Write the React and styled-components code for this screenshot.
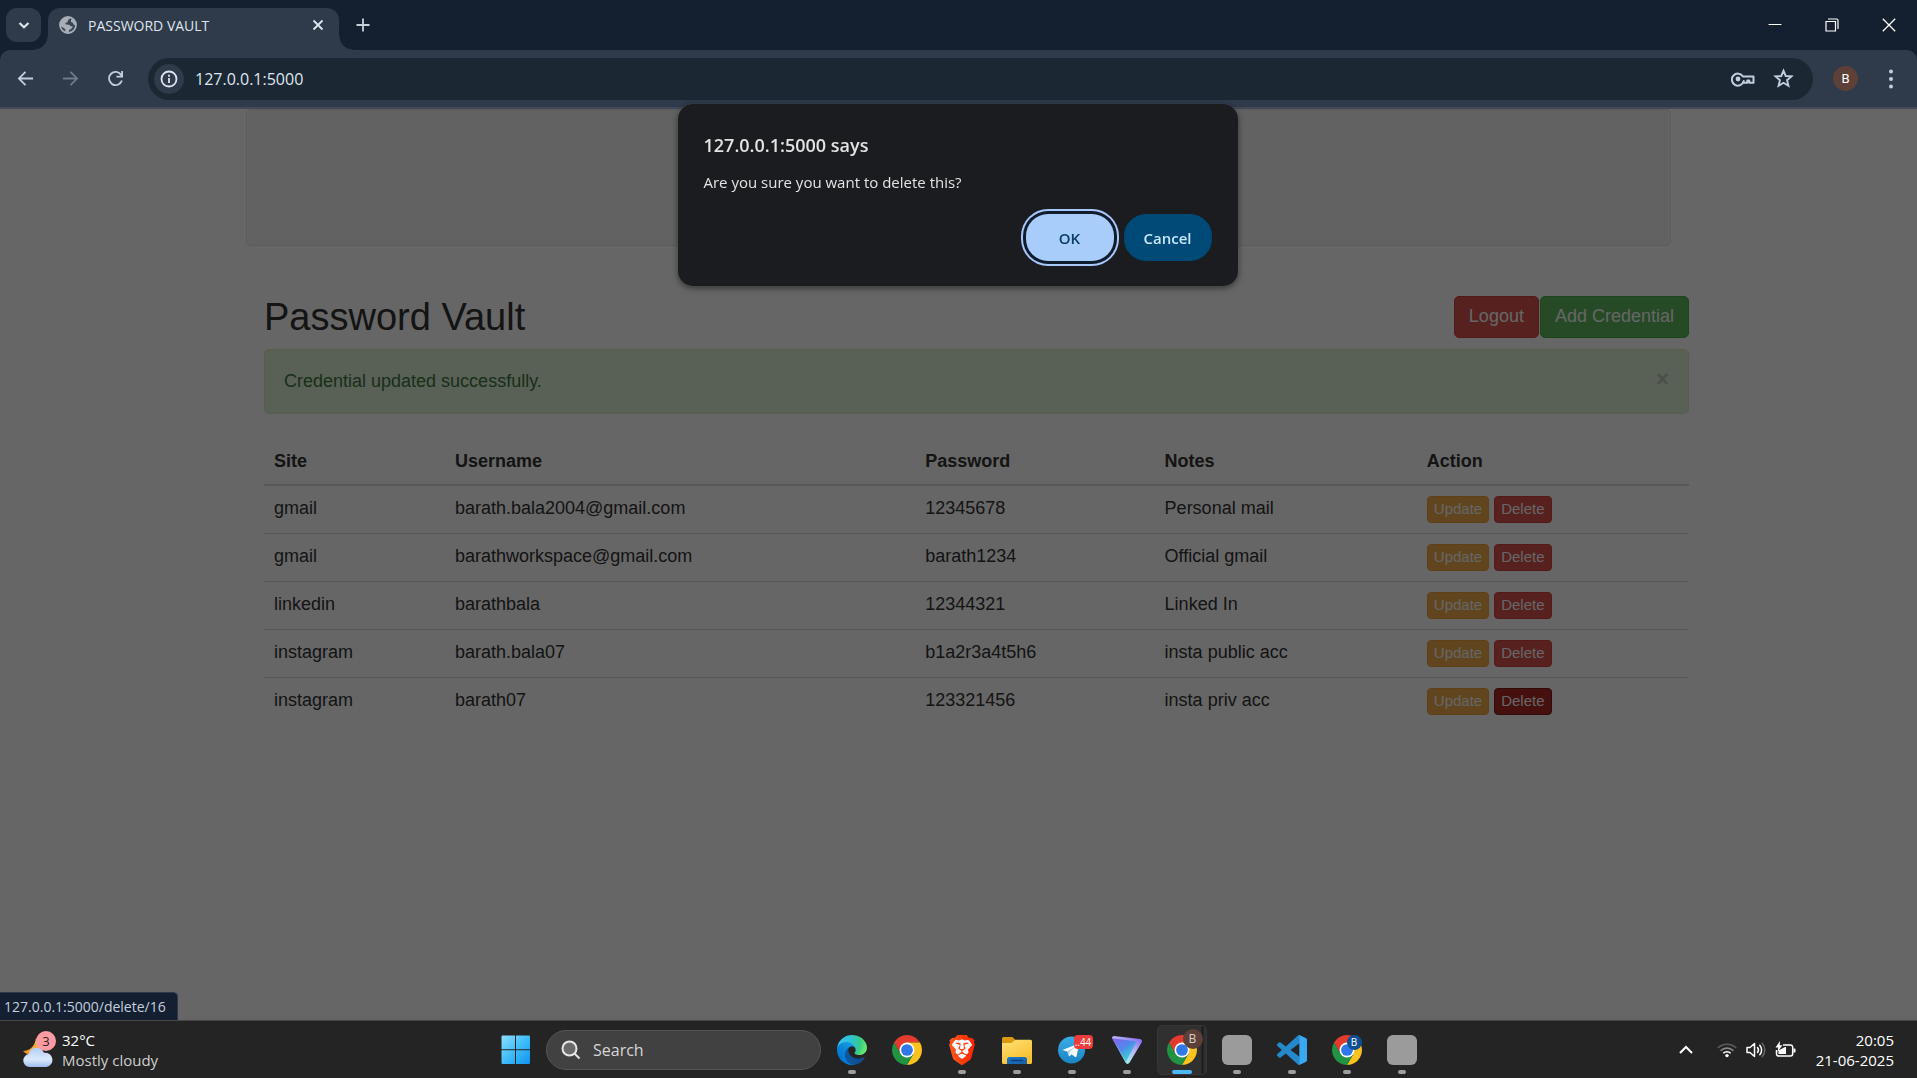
import React from "react";
import styled, { createGlobalStyle, css } from "styled-components";

const uiFont = '"Segoe UI", "Open Sans", "Noto Sans", sans-serif';
const pageFont = '"Helvetica Neue", Arial, "Liberation Sans", sans-serif';

const GlobalStyle = createGlobalStyle`
  *, *::before, *::after { box-sizing: border-box; }
  body { margin: 0; background: #242424; }
  button, input { font: inherit; color: inherit; margin: 0; }
  button { cursor: pointer; }
  svg { display: block; flex: none; }
`;

const Screen = styled.div`
  display: flex;
  flex-direction: column;
  min-height: 100vh;
  font-family: ${uiFont};
`;

/* ---------- browser chrome ---------- */

const BrowserBar = styled.header`
  background: #141f2f;
  color: #dfe5ee;
`;

const TabStrip = styled.div`
  display: flex;
  align-items: flex-end;
  height: 50px;
  padding-left: 6px;
`;

const PlainButton = styled.button`
  display: flex;
  align-items: center;
  justify-content: center;
  padding: 0;
  border: 0;
  background: none;
`;

const TabSearch = styled(PlainButton)`
  width: 35px;
  height: 34px;
  margin: 0 7px 8px 0;
  border-radius: 11px;
  background: #2f3a4a;
`;

const Tab = styled.div`
  position: relative;
  display: flex;
  align-items: center;
  gap: 11px;
  width: 291px;
  height: 42px;
  padding: 0 12px 8px 11px;
  border-radius: 12px 12px 0 0;
  background: #2f3a4a;
  font-size: 14px;

  &::before,
  &::after {
    content: "";
    position: absolute;
    bottom: 0;
    width: 14px;
    height: 14px;
  }
  &::before {
    right: 100%;
    background: radial-gradient(circle at 0 0, transparent 13px, #2f3a4a 14px);
  }
  &::after {
    left: 100%;
    background: radial-gradient(circle at 100% 0, transparent 13px, #2f3a4a 14px);
  }
`;

const TabTitle = styled.span`
  flex: 1;
  white-space: nowrap;
`;

const TabButton = styled(PlainButton)`
  width: 18px;
  height: 20px;
`;

const NewTab = styled(PlainButton)`
  width: 34px;
  height: 34px;
  margin: 0 0 8px 7px;
  color: #c8d0dc;
`;

const WindowControls = styled.div`
  display: flex;
  align-self: stretch;
  margin-left: auto;
`;

const WindowButton = styled(PlainButton)`
  width: 57px;
  height: 49px;
  color: #fff;
`;

const Toolbar = styled.div`
  display: flex;
  align-items: center;
  height: 59px;
  padding: 0 15px 0 3px;
  border-bottom: 2px solid #424a57;
  border-radius: 10px 10px 0 0;
  background: #2f3a4a;
`;

const ToolButton = styled(PlainButton)`
  width: 45px;
  height: 42px;
  color: ${(p) => (p.$dim ? "#6f7988" : "#c3cddd")};
`;

const AddressBar = styled.div`
  display: flex;
  align-items: center;
  flex: 1;
  height: 42px;
  margin-left: 10px;
  padding: 0 10px 0 6px;
  border-radius: 21px;
  background: #1b2834;
`;

const SiteInfo = styled(PlainButton)`
  width: 30px;
  height: 30px;
  border-radius: 50%;
  background: #2f3a4a;
`;

const AddressInput = styled.input`
  flex: 1;
  min-width: 0;
  padding: 0 0 0 11px;
  border: 0;
  outline: 0;
  background: none;
  font-size: 16px;
`;

const AddressButton = styled(PlainButton)`
  width: 40px;
  height: 40px;
  color: #c3cddd;
`;

const ProfileButton = styled(PlainButton)`
  width: 25px;
  height: 25px;
  margin: 0 22px 0 20px;
  border-radius: 50%;
  background: #5d4037;
  color: #fff;
  font-size: 13px;
  font-family: Roboto, sans-serif;
`;

const MenuButton = styled(PlainButton)`
  width: 22px;
  height: 42px;
  color: #c3cddd;
`;

/* ---------- page ---------- */

const Viewport = styled.main`
  position: relative;
  flex: 1;
  background: #fff;
  color: #333;
  font-family: ${pageFont};
  font-size: 18px;
  line-height: 25px;
`;

const Scrim = styled.div`
  position: absolute;
  inset: 0;
  background: rgba(0, 0, 0, 0.6);
`;

const Container = styled.div`
  max-width: 1463px;
  margin: 0 auto;
  padding: 0 19px;
`;

const Well = styled.div`
  padding: 67px 0 68px;
  border: 1px solid #e3e3e3;
  border-radius: 5px;
  background: #f5f5f5;
`;

const Section = styled.section`
  margin: 50px -18px 0 18px;
`;

const SectionHeader = styled.div`
  display: flex;
  align-items: center;
  justify-content: space-between;
`;

const Title = styled.h1`
  margin: 0;
  font-size: 38px;
  font-weight: 500;
  line-height: 40px;
`;

const Actions = styled.div`
  display: flex;
  gap: ${(p) => p.$gap}px;
`;

const palette = {
  danger: css`
    background: #d9534f;
    border-color: #d43f3a;
  `,
  dangerActive: css`
    background: #ac2925;
    border-color: #761c19;
  `,
  success: css`
    background: #5cb85c;
    border-color: #4cae4c;
  `,
  warning: css`
    background: #f0ad4e;
    border-color: #eea236;
  `,
};

const Button = styled.button`
  padding: ${(p) => (p.$small ? "0 6px 1px" : "7px 14px 8px")};
  border: 1px solid;
  border-radius: ${(p) => (p.$small ? 4 : 5)}px;
  font-size: ${(p) => (p.$small ? 15 : 18)}px;
  line-height: ${(p) => (p.$small ? 24 : 25)}px;
  white-space: nowrap;
  ${(p) => palette[p.$tone]}
  color: #fff;
`;

const Alert = styled.div`
  display: flex;
  align-items: flex-start;
  justify-content: space-between;
  margin-top: 11px;
  padding: 19px;
  border: 1px solid #d6e9c6;
  border-radius: 5px;
  background: #dff0d8;
  color: #3c763d;
`;

const AlertClose = styled(PlainButton)`
  width: 13px;
  color: #000;
  font-size: 23px;
  font-weight: 700;
  line-height: 20px;
  opacity: 0.16;
`;

const Table = styled.table`
  width: 100%;
  margin-top: 25px;
  border-collapse: collapse;
  table-layout: fixed;
`;

const Col = styled.col`
  width: ${(p) => p.$w}%;
`;

const HeadCell = styled.th`
  padding: 10px;
  border-bottom: 2px solid #ddd;
  text-align: left;
  vertical-align: bottom;
`;

const Cell = styled.td`
  height: 48px;
  padding: 10px 10px 9px;
  border-top: 1px solid #ddd;
  line-height: 25px;
  vertical-align: top;
`;

const StatusBubble = styled.div`
  position: absolute;
  left: 0;
  bottom: 0;
  padding: 0 11px 0 4px;
  border: 1px solid #2d3848;
  border-width: 1px 1px 0 0;
  border-radius: 0 5px 0 0;
  background: #142032;
  color: #c5cedb;
  font-family: ${uiFont};
  font-size: 14px;
  line-height: 27px;
`;

/* ---------- confirm dialog ---------- */

const DialogLayer = styled.div`
  position: fixed;
  top: 104px;
  left: 0;
  right: 2px;
  display: flex;
  justify-content: center;
`;

const Dialog = styled.div`
  width: 560px;
  padding: 25px 26px;
  border-radius: 15px;
  background: #1a1c20;
  box-shadow: 0 2px 6px rgba(0, 0, 0, 0.5), 0 0 1px rgba(140, 150, 160, 0.6);
  color: #e3e3e3;
`;

const DialogTitle = styled.h2`
  margin: 0;
  font-size: 18px;
  font-weight: 600;
  line-height: 32px;
`;

const DialogText = styled.p`
  margin: 9px 0 0;
  font-size: 15px;
  line-height: 25px;
`;

const DialogButtons = styled.div`
  display: flex;
  justify-content: flex-end;
  gap: 10px;
  margin-top: 19px;
`;

const DialogButton = styled.button`
  width: 88px;
  height: 47px;
  padding: 0;
  border: 0;
  border-radius: 22px;
  background: ${(p) => (p.$primary ? "#a8cdfb" : "#004a77")};
  color: ${(p) => (p.$primary ? "#0b3a66" : "#c9e7ff")};
  font-size: 15px;
  font-weight: 600;
  box-shadow: ${(p) => (p.$primary ? "0 0 0 3px #0e1c2b, 0 0 0 5px #a8c7fa" : "none")};
`;

/* ---------- taskbar ---------- */

const Taskbar = styled.footer`
  display: grid;
  grid-template-columns: 1fr auto 1fr;
  align-items: center;
  height: 58px;
  border-top: 1px solid #464646;
  background: #242424;
  color: #fff;
  font-size: 15px;
  line-height: 20px;
`;

const Weather = styled(PlainButton)`
  justify-self: start;
  gap: 7px;
  padding-left: 21px;
  text-align: left;
`;

const WeatherText = styled.span`
  display: flex;
  flex-direction: column;
`;

const Muted = styled.span`
  color: #cfcfcf;
`;

const IconStack = styled.span`
  position: relative;
  display: block;
`;

const Badge = styled.span`
  position: absolute;
  display: flex;
  align-items: center;
  justify-content: center;
  top: ${(p) => p.$top}px;
  right: ${(p) => p.$right}px;
  min-width: ${(p) => p.$size}px;
  height: ${(p) => p.$h || p.$size}px;
  border-radius: ${(p) => p.$round || 10}px;
  background: ${(p) => p.$bg};
  color: ${(p) => p.$fg || "#fff"};
  font-size: ${(p) => p.$font || 12}px;
  line-height: 12px;
  white-space: nowrap;
`;

const Apps = styled.nav`
  display: flex;
  align-items: center;
`;

const TaskButton = styled(PlainButton)`
  position: relative;
  width: 55px;
  height: 57px;

  &::after {
    content: "";
    position: absolute;
    bottom: 4px;
    width: ${(p) => (p.$state === "active" ? 20 : 8)}px;
    height: 4px;
    border-radius: 2px;
    background: ${(p) => (p.$state === "active" ? "#4cb8f5" : "#9d9d9d")};
    display: ${(p) => (p.$state ? "block" : "none")};
  }
`;

const ActiveTile = styled.span`
  display: flex;
  align-items: center;
  justify-content: center;
  width: 50px;
  height: 50px;
  border: 1px solid #363636;
  border-radius: 5px;
  background: linear-gradient(90deg, #303030 43px, #1c1c1c 44px, #1c1c1c 45px, #303030 46px);
`;

const GreySquare = styled.span`
  width: 30px;
  height: 30px;
  border-radius: 6px;
  background: #9b9b9b;
`;

const SearchBox = styled.label`
  display: flex;
  align-items: center;
  gap: 12px;
  width: 275px;
  height: 40px;
  margin: 0 3px;
  padding: 0 14px;
  border: 1px solid #555;
  border-radius: 20px;
  background: #414141;
`;

const SearchInput = styled.input`
  flex: 1;
  min-width: 0;
  padding: 0;
  border: 0;
  outline: 0;
  background: none;
  font-size: 16px;

  &::placeholder {
    color: #d6d6d6;
    opacity: 1;
  }
`;

const Tray = styled.div`
  display: flex;
  align-items: center;
  justify-self: end;
  padding-right: 23px;
`;

const TrayButton = styled(PlainButton)`
  gap: 9px;
  margin-right: ${(p) => p.$after}px;
`;

const Clock = styled.time`
  display: flex;
  flex-direction: column;
  text-align: right;
`;

/* ---------- icons ---------- */

const Stroke = ({ size = 18, w = 2, box = 18, children, ...rest }) => (
  <svg width={size} height={size} viewBox={`0 0 ${box} ${box}`} fill="none" stroke="currentColor" strokeWidth={w} aria-hidden="true" {...rest}>
    {children}
  </svg>
);

const ChromeLogo = () => (
  <svg width="30" height="30" viewBox="2 2 44 44" aria-hidden="true">
    <path fill="#e33b2e" d="M43.05 13A22 22 0 0 0 4.95 13l9.52 16.5L24 24V13z" />
    <path fill="#fcc31e" d="M43.05 13A22 22 0 0 1 24 46l9.53-16.5L24 24V13z" />
    <path fill="#229342" d="M24 46A22 22 0 0 1 4.95 13l9.52 16.5L24 24l9.53 5.5z" />
    <circle cx="24" cy="24" r="11" fill="#fff" />
    <circle cx="24" cy="24" r="8.6" fill="#2f78e6" />
  </svg>
);

const EdgeLogo = () => (
  <svg width="30" height="30" viewBox="4.7 5 256 256" aria-hidden="true">
    <defs>
      <linearGradient id="edgeA" x1="63" y1="177" x2="241" y2="177" gradientUnits="userSpaceOnUse">
        <stop stopColor="#0c59a4" />
        <stop offset="1" stopColor="#114a8b" />
      </linearGradient>
      <linearGradient id="edgeB" x1="157" y1="99" x2="46" y2="221" gradientUnits="userSpaceOnUse">
        <stop stopColor="#1b9de2" />
        <stop offset="0.16" stopColor="#1595df" />
        <stop offset="0.67" stopColor="#0680d7" />
        <stop offset="1" stopColor="#0078d4" />
      </linearGradient>
      <radialGradient id="edgeC" cx="30" cy="55" r="230" gradientUnits="userSpaceOnUse">
        <stop stopColor="#35c1f1" />
        <stop offset="0.4" stopColor="#2cc3d5" />
        <stop offset="0.75" stopColor="#36c98b" />
        <stop offset="1" stopColor="#66eb6e" />
      </radialGradient>
    </defs>
    <path fill="url(#edgeA)" d="M235.68 195.46a93.73 93.73 0 01-10.54 4.71 101.87 101.87 0 01-35.9 6.46c-47.32 0-88.54-32.55-88.54-74.32a31.48 31.48 0 0116.43-27.47c-42.8 1.8-53.8 46.4-53.8 72.53 0 73.88 68.09 81.37 82.76 81.37 7.91 0 19.84-2.3 27-4.56l1.31-.44a128.34 128.34 0 0066.6-52.8 4 4 0 00-5.32-5.48z" />
    <path fill="url(#edgeB)" d="M110.34 246.34A79.2 79.2 0 0187.6 225a80.72 80.72 0 0129.53-120.16c3.12-1.47 8.45-4.13 15.54-4a32.35 32.35 0 0125.69 13 31.88 31.88 0 016.36 18.66c0-.21 24.46-79.6-80-79.6-43.9 0-80 41.66-80 78.21a130.15 130.15 0 0012.11 56 128 128 0 00156.38 67.11 75.55 75.55 0 01-62.78-8z" />
    <path fill="url(#edgeC)" d="M156.94 153.78c-.81 1.05-3.3 2.5-3.3 5.66 0 2.61 1.7 5.12 4.72 7.23 14.38 10 41.49 8.68 41.56 8.68a59.56 59.56 0 0030.27-8.35A61.38 61.38 0 00260.55 114c.26-22.41-8-37.31-11.34-43.91C228.06 28.73 182.41 5 132.77 5a128 128 0 00-128 126.2c.48-36.54 36.8-66.05 80-66.05 3.5 0 23.46.34 42 10.07 16.34 8.58 24.9 18.94 30.85 29.21 6.18 10.67 7.28 24.15 7.28 29.52s-2.74 13.33-7.96 19.83z" />
  </svg>
);

const BraveLogo = () => (
  <svg width="30" height="30" viewBox="0 0 24 24" aria-hidden="true">
    <defs>
      <linearGradient id="brave" x1="0" x2="1">
        <stop stopColor="#ff5a1f" />
        <stop offset="1" stopColor="#ff2200" />
      </linearGradient>
    </defs>
    <path fill="url(#brave)" d="M15.68 0l2.096 2.38s1.84-.512 2.709.358c.868.87 1.584 1.638 1.584 1.638l-.562 1.381.715 2.047s-2.104 7.98-2.35 8.955c-.486 1.919-.818 2.66-2.198 3.633-1.38.972-3.884 2.66-4.293 2.916-.409.256-.92.692-1.38.692-.46 0-.97-.436-1.38-.692a185.796 185.796 0 01-4.293-2.916c-1.38-.973-1.712-1.714-2.197-3.633-.247-.975-2.351-8.955-2.351-8.955l.715-2.047-.562-1.381s.716-.768 1.585-1.638c.868-.87 2.708-.358 2.708-.358L8.321 0h7.36z" />
    <path fill="#fff" d="M12.001 14.936c-.14 0-1.038.317-1.758.69-.72.373-1.242.637-1.409.742-.167.104-.065.301.087.409.152.107 2.194 1.69 2.393 1.866.198.175.489.464.687.464.198 0 .49-.29.688-.464.198-.175 2.24-1.759 2.392-1.866.152-.108.254-.305.087-.41-.167-.104-.689-.368-1.41-.741-.72-.373-1.617-.69-1.757-.69zm0-11.278s-.409.001-1.022.206-1.278.46-1.584.46c-.307 0-2.581-.434-2.581-.434S4.119 7.152 4.119 7.849c0 .697.339.881.68 1.243l2.02 2.149c.192.203.59.511.356 1.066-.235.555-.58 1.26-.196 1.977.384.716 1.042 1.194 1.464 1.115.421-.08 1.412-.598 1.776-.834.364-.237 1.518-1.19 1.518-1.554 0-.365-1.193-1.02-1.413-1.168-.22-.15-1.226-.725-1.247-.95-.02-.227-.012-.293.284-.851.297-.559.831-1.304.742-1.8-.089-.495-.95-.753-1.565-.986-.615-.232-1.799-.671-1.947-.74-.148-.068-.11-.133.339-.175.448-.043 1.719-.212 2.292-.052.573.16 1.552.403 1.632.532.079.13.149.134.067.579-.081.445-.5 2.581-.541 2.96-.04.38-.12.63.288.724.409.094 1.097.256 1.333.256s.924-.162 1.333-.256c.408-.093.329-.344.288-.723-.04-.38-.46-2.516-.541-2.961-.082-.445-.012-.45.067-.579.08-.129 1.059-.372 1.632-.532.573-.16 1.845.009 2.292.052.449.042.487.107.339.175-.148.069-1.332.508-1.947.74-.615.233-1.476.49-1.565.986-.09.496.445 1.241.742 1.8.297.558.304.624.284.85-.02.226-1.026.802-1.247.95-.22.15-1.413.804-1.413 1.169 0 .364 1.154 1.317 1.518 1.554.364.236 1.355.755 1.776.834.422.079 1.08-.4 1.464-1.115.384-.716.039-1.422-.195-1.977-.235-.555.163-.863.355-1.066l2.02-2.149c.341-.362.68-.546.68-1.243 0-.697-2.695-3.96-2.695-3.96s-2.274.436-2.58.436c-.307 0-.972-.256-1.585-.461-.613-.205-1.022-.206-1.022-.206z" />
  </svg>
);

const FolderIcon = () => (
  <svg width="30" height="30" viewBox="0 0 30 30" aria-hidden="true">
    <defs>
      <linearGradient id="folder" x1="0" y1="0" x2="0.6" y2="1">
        <stop stopColor="#ffe178" />
        <stop offset="1" stopColor="#f7bf2c" />
      </linearGradient>
      <linearGradient id="tray" x1="0" y1="0" x2="1" y2="1">
        <stop stopColor="#1a78c8" />
        <stop offset="1" stopColor="#1a5fa6" />
      </linearGradient>
    </defs>
    <path fill="#d99b0e" d="M1.5 2h9l3 3v5H0V3.5A1.5 1.5 0 0 1 1.5 2z" />
    <path fill="url(#folder)" d="M0 8h9.5l4-3.3H28.5A1.5 1.5 0 0 1 30 6.2V27.5A1.5 1.5 0 0 1 28.5 29h-27A1.5 1.5 0 0 1 0 27.5z" />
    <path fill="url(#tray)" d="M7.5 22h15a2.5 2.5 0 0 1 2.5 2.5V29H5v-4.500A2.5 2.5 0 0 1 7.5 22z" />
    <path stroke="#0d3f78" strokeWidth="1.5" strokeLinecap="round" d="M9.5 25.500h11" />
  </svg>
);

const TelegramLogo = () => (
  <svg width="30" height="30" viewBox="0 0 30 30" aria-hidden="true">
    <defs>
      <linearGradient id="tg" x1="0" y1="0" x2="0" y2="1">
        <stop stopColor="#38aee6" />
        <stop offset="1" stopColor="#1b84c4" />
      </linearGradient>
    </defs>
    <circle cx="14.5" cy="15" r="13.5" fill="url(#tg)" />
    <path fill="#fff" d="M6 14.8 20.6 9.1c.8-.3 1.4.2 1.2 1.2l-2.2 11c-.2.8-.8 1-1.4.6l-3.6-2.7-1.8 1.7c-.5.5-.8.4-1-.2l-1.3-4.2-4.3-1.3c-.8-.2-.8-.6-.2-.4z" />
    <path fill="#a9cfe6" d="m10.5 16.5 8.6-5.4-6.6 6.5-.3 3.1z" />
  </svg>
);

const ProtonLogo = () => (
  <svg width="30" height="30" viewBox="0 0 30 30" aria-hidden="true">
    <defs>
      <linearGradient id="pvA" x1="0" y1="0" x2="0.7" y2="1">
        <stop stopColor="#8a5cf6" />
        <stop offset="0.5" stopColor="#4f8ae8" />
        <stop offset="1" stopColor="#36e2d0" />
      </linearGradient>
      <linearGradient id="pvB" x1="1" y1="0" x2="0.3" y2="1">
        <stop stopColor="#7b5cf0" />
        <stop offset="0.5" stopColor="#b9b8f5" />
        <stop offset="1" stopColor="#9df7ee" />
      </linearGradient>
    </defs>
    <path fill="url(#pvB)" d="M2.2 1 28 4c1.8.3 2.6 2 1.6 3.5L17.5 27.8c-1 1.6-3.2 1.5-4-.2L.3 3.600C-.3 2.2.7.9 2.2 1z" />
    <path fill="url(#pvA)" d="M.3 3.2 22.5 6c1.3.2 1.8 1.3 1.1 2.4L13.9 26.8z" />
  </svg>
);

const VsCodeLogo = () => (
  <svg width="30" height="30" viewBox="0 0 24 24" aria-hidden="true">
    <path fill="#2489ca" d="M23.15 2.587L18.21.21a1.494 1.494 0 0 0-1.705.29l-9.46 8.63-4.12-3.128a.999.999 0 0 0-1.276.057L.327 7.261A1 1 0 0 0 .326 8.74L3.899 12 .326 15.26a1 1 0 0 0 .001 1.479L1.65 17.94a.999.999 0 0 0 1.276.057l4.12-3.128 9.46 8.63a1.492 1.492 0 0 0 1.704.29l4.942-2.377A1.5 1.5 0 0 0 24 20.06V3.939a1.5 1.5 0 0 0-.85-1.352zm-5.146 14.861L10.826 12l7.178-5.448v10.896z" />
    <path fill="#3aa9f2" d="M18.004.2 23.15 2.587A1.5 1.5 0 0 1 24 3.939V20.06a1.5 1.5 0 0 1-.848 1.352L18.004 23.8z" />
  </svg>
);

const WindowsLogo = () => (
  <svg width="30" height="30" viewBox="0 0 30 30" aria-hidden="true">
    <defs>
      <linearGradient id="win" x1="0" y1="0" x2="30" y2="30" gradientUnits="userSpaceOnUse">
        <stop stopColor="#8fe0ff" />
        <stop offset="0.5" stopColor="#3fbdf8" />
        <stop offset="1" stopColor="#0a8ff0" />
      </linearGradient>
    </defs>
    <path fill="url(#win)" d="M1.5.5H14v13.700H.5V1.500a1 1 0 0 1 1-1zM15 .5h13a1 1 0 0 1 1 1v12.700H15zM.5 15.300H14V29H1.500a1 1 0 0 1-1-1zM15 15.300h14V28a1 1 0 0 1-1 1H15z" />
  </svg>
);

const WeatherIcon = () => (
  <svg width="34" height="36" viewBox="0 0 34 36" aria-hidden="true">
    <defs>
      <linearGradient id="moon" x1="0" y1="1" x2="1" y2="0">
        <stop stopColor="#f08c1c" />
        <stop offset="1" stopColor="#fbc04a" />
      </linearGradient>
      <linearGradient id="cloud" x1="0" y1="0" x2="0" y2="1">
        <stop stopColor="#b4cdf5" />
        <stop offset="0.6" stopColor="#dbe8fc" />
        <stop offset="1" stopColor="#9fbdf0" />
      </linearGradient>
    </defs>
    <path fill="url(#moon)" d="M15 6c-1 8-6 13-13 13 3 4 10 5 14 2s5-10-1-15z" />
    <path fill="url(#cloud)" d="M8.5 35a6.5 6.5 0 0 1-.8-12.9A8 8 0 0 1 23 20.8a7.2 7.2 0 0 1 2.5 14.2z" />
  </svg>
);

const credentials = [
  ["gmail", "barath.bala2004@gmail.com", "12345678", "Personal mail"],
  ["gmail", "barathworkspace@gmail.com", "barath1234", "Official gmail"],
  ["linkedin", "barathbala", "12344321", "Linked In"],
  ["instagram", "barath.bala07", "b1a2r3a4t5h6", "insta public acc"],
  ["instagram", "barath07", "123321456", "insta priv acc"],
];

const columns = [
  ["Site", 12.7],
  ["Username", 33],
  ["Password", 16.8],
  ["Notes", 18.4],
  ["Action", 19.1],
];

function Browser() {
  return (
    <BrowserBar>
      <TabStrip>
        <TabSearch aria-label="Search tabs">
          <Stroke size={12} box={12} w={2.2}><path d="M1.5 4 6 8.300 10.5 4" /></Stroke>
        </TabSearch>
        <Tab>
          <svg width="18" height="18" viewBox="0 0 18 18" aria-hidden="true">
            <circle cx="9" cy="9" r="8" fill="#3b4554" stroke="#a9afb8" strokeWidth="1.8" />
            <path fill="#a9afb8" d="M2 4.8 6 1.2 10 1l1 1.8-2 1.3-.3 2-2.4.8.5 1.6 3.4.2 1.6 1.6 2.2.2L12.2 13l-2 .8-.6 3-3.2-.3-.2-3.2-1.7-1.6L1 10z" />
            <path fill="#a9afb8" d="m12 3.5 2.5-.3 2 3.3.3 3-2-.8-1.3-2.2L12 6z" />
          </svg>
          <TabTitle>PASSWORD VAULT</TabTitle>
          <TabButton aria-label="Close tab">
            <Stroke size={12} box={12} w={1.8}><path d="m1.5 1.5 9 9m0-9-9 9" /></Stroke>
          </TabButton>
        </Tab>
        <NewTab aria-label="New tab">
          <Stroke size={14} box={14} w={1.8}><path d="M7 .5v13M.5 7h13" /></Stroke>
        </NewTab>
        <WindowControls>
          <WindowButton aria-label="Minimize">
            <Stroke size={14} box={14} w={1}><path d="M.5 6.500h13" /></Stroke>
          </WindowButton>
          <WindowButton aria-label="Restore">
            <Stroke size={14} box={14} w={1.2}>
              <path d="M1 3.500h9.500V13H1zM3 1h8.500Q13 1 13 2.500V11" />
            </Stroke>
          </WindowButton>
          <WindowButton aria-label="Close window">
            <Stroke size={14} box={14} w={1.3}><path d="m.8.8 12.4 12.4m0-12.4L.8 13.2" /></Stroke>
          </WindowButton>
        </WindowControls>
      </TabStrip>
      <Toolbar>
        <ToolButton aria-label="Back">
          <Stroke size={17} w={1.9}><path d="M17 9H2.500M9 2 2 9l7 7" /></Stroke>
        </ToolButton>
        <ToolButton aria-label="Forward" $dim>
          <Stroke size={17} w={1.9}><path d="M1 9h14.500M9 2l7 7-7 7" /></Stroke>
        </ToolButton>
        <ToolButton aria-label="Reload">
          <Stroke size={17} w={1.9}><path d="M15.8 11.200A7 7 0 1 1 15.2 5.500M16 1v6h-6" /></Stroke>
        </ToolButton>
        <AddressBar>
          <SiteInfo aria-label="View site information">
            <Stroke w={1.8} color="#dfe5ee"><circle cx="9" cy="9" r="7.5" /><path d="M9 8v5M9 4.8v1.9" /></Stroke>
          </SiteInfo>
          <AddressInput aria-label="Address" defaultValue="127.0.0.1:5000" />
          <AddressButton aria-label="Manage passwords">
            <svg width="24" height="16" viewBox="0 0 24 16" fill="none" stroke="currentColor" strokeWidth="2" aria-hidden="true">
              <path d="M12 5.500h10.500v6.200h-4.200V9.500h-2v2.200h-3.600V10A6 6 0 1 1 12 5.500z" strokeLinejoin="round" />
              <circle cx="7" cy="8" r="2.4" fill="currentColor" stroke="none" />
            </svg>
          </AddressButton>
          <AddressButton aria-label="Bookmark this tab">
            <Stroke size={21} box={20} w={1.8}>
              <path d="m10 2.500 2.100 5.100 5.500.4-4.200 3.600 1.300 5.400-4.700-2.900L5.300 17l1.300-5.400L2.400 8l5.500-.4z" />
            </Stroke>
          </AddressButton>
        </AddressBar>
        <ProfileButton aria-label="Profile B">B</ProfileButton>
        <MenuButton aria-label="Browser menu">
          <svg width="4" height="20" viewBox="0 0 4 20" fill="currentColor" aria-hidden="true">
            <circle cx="2" cy="2.500" r="2" /><circle cx="2" cy="10" r="2" /><circle cx="2" cy="17.500" r="2" />
          </svg>
        </MenuButton>
      </Toolbar>
    </BrowserBar>
  );
}

function Page() {
  return (
    <Viewport>
      <Container>
        <Well />
        <Section>
          <SectionHeader>
            <Title>Password Vault</Title>
            <Actions $gap={1}>
              <Button $tone="danger">Logout</Button>
              <Button $tone="success">Add Credential</Button>
            </Actions>
          </SectionHeader>
          <Alert role="status">
            <span>Credential updated successfully.</span>
            <AlertClose aria-label="Dismiss">×</AlertClose>
          </Alert>
          <Table>
            <colgroup>
              {columns.map(([name, w]) => <Col key={name} $w={w} />)}
            </colgroup>
            <thead>
              <tr>{columns.map(([name]) => <HeadCell key={name} scope="col">{name}</HeadCell>)}</tr>
            </thead>
            <tbody>
              {credentials.map((row, i) => (
                <tr key={row[1]}>
                  {row.map((value) => <Cell key={value}>{value}</Cell>)}
                  <Cell>
                    <Actions $gap={5}>
                      <Button $small $tone="warning">Update</Button>
                      <Button $small $tone={i === credentials.length - 1 ? "dangerActive" : "danger"}>Delete</Button>
                    </Actions>
                  </Cell>
                </tr>
              ))}
            </tbody>
          </Table>
        </Section>
      </Container>
      <Scrim />
      <StatusBubble>127.0.0.1:5000/delete/16</StatusBubble>
    </Viewport>
  );
}

function Confirm() {
  return (
    <DialogLayer>
      <Dialog role="alertdialog" aria-labelledby="confirm-title" aria-describedby="confirm-text">
        <DialogTitle id="confirm-title">127.0.0.1:5000 says</DialogTitle>
        <DialogText id="confirm-text">Are you sure you want to delete this?</DialogText>
        <DialogButtons>
          <DialogButton $primary>OK</DialogButton>
          <DialogButton>Cancel</DialogButton>
        </DialogButtons>
      </Dialog>
    </DialogLayer>
  );
}

function WindowsTaskbar() {
  return (
    <Taskbar>
      <Weather>
        <IconStack>
          <WeatherIcon />
          <Badge $top={-1} $right={-1} $size={20} $bg="#ff9ba3" $fg="#222" $font={13}>3</Badge>
        </IconStack>
        <WeatherText>
          <span>32°C</span>
          <Muted>Mostly cloudy</Muted>
        </WeatherText>
      </Weather>
      <Apps aria-label="Taskbar">
        <TaskButton aria-label="Start"><WindowsLogo /></TaskButton>
        <SearchBox>
          <Stroke size={20} box={20} w={2} color="#e6e6e6">
            <circle cx="8.5" cy="8.5" r="7" fill="#6a6a6a" /><path d="m13.5 13.5 5 5" />
          </Stroke>
          <SearchInput aria-label="Search" placeholder="Search" />
        </SearchBox>
        <TaskButton aria-label="Edge" $state="open"><EdgeLogo /></TaskButton>
        <TaskButton aria-label="Chrome"><ChromeLogo /></TaskButton>
        <TaskButton aria-label="Brave" $state="open"><BraveLogo /></TaskButton>
        <TaskButton aria-label="File Explorer" $state="open"><FolderIcon /></TaskButton>
        <TaskButton aria-label="Telegram" $state="open">
          <IconStack>
            <TelegramLogo />
            <Badge $top={0} $right={-6} $size={19} $h={14} $round={4} $bg="#ee3b3b" $font={10}>..44</Badge>
          </IconStack>
        </TaskButton>
        <TaskButton aria-label="Proton VPN" $state="open"><ProtonLogo /></TaskButton>
        <TaskButton aria-label="Chrome, profile B" $state="active">
          <ActiveTile>
            <IconStack>
              <ChromeLogo />
              <Badge $top={-6} $right={-6} $size={20} $bg="#5d4037" $fg="#d8cfcc">B</Badge>
            </IconStack>
          </ActiveTile>
        </TaskButton>
        <TaskButton aria-label="Application" $state="open"><GreySquare /></TaskButton>
        <TaskButton aria-label="Visual Studio Code" $state="open"><VsCodeLogo /></TaskButton>
        <TaskButton aria-label="Chrome, second profile" $state="open">
          <IconStack>
            <ChromeLogo />
            <Badge $top={0} $right={0} $size={15} $bg="#0b4f94" $font={10}>B</Badge>
          </IconStack>
        </TaskButton>
        <TaskButton aria-label="Application" $state="open"><GreySquare /></TaskButton>
      </Apps>
      <Tray>
        <TrayButton aria-label="Show hidden icons" $after={24}>
          <Stroke size={14} box={14} w={2}><path d="m1 10 6-6 6 6" /></Stroke>
        </TrayButton>
        <TrayButton aria-label="Network, volume and battery" $after={20}>
          <svg width="20" height="16" viewBox="0 0 20 16" fill="none" stroke="#fff" strokeWidth="1.6" aria-hidden="true">
            <path stroke="#5c5c5c" d="M.8 6a13 13 0 0 1 18.4 0" />
            <path stroke="#8a8a8a" d="M3.6 8.800a9 9 0 0 1 12.8 0" />
            <path d="M6.3 11.200a5.3 5.3 0 0 1 7.4 0" />
            <circle cx="10" cy="13.600" r="1.7" fill="#fff" stroke="none" />
          </svg>
          <svg width="20" height="18" viewBox="0 0 20 18" fill="none" stroke="#fff" strokeWidth="1.5" strokeLinejoin="round" strokeLinecap="round" aria-hidden="true">
            <path d="M1 6.500h3L8.500 2.500v13L4 11.500H1z" />
            <path d="M11.5 6.500a4 4 0 0 1 0 5M13.8 4.300a7 7 0 0 1 0 9.400" />
            <path stroke="#666" d="M16.2 2.300a10 10 0 0 1 0 13.400" />
          </svg>
          <svg width="21" height="18" viewBox="0 0 21 18" fill="none" stroke="#fff" strokeWidth="1.5" aria-hidden="true">
            <path d="M8 4h7.500A2.2 2.2 0 0 1 17.7 6.200v6.600A2.2 2.2 0 0 1 15.5 15H3.700A2.2 2.2 0 0 1 1.5 12.800V9" />
            <path fill="#fff" stroke="none" d="M18.5 7.500h1.200a.8.8 0 0 1 .8.8v2.400a.8.8 0 0 1-.8.8h-1.200zM3.5 9.500 10 6h1v7H3.500zM5 0 .5 6.500h2.700L2.500 11l5-6.800H4.700z" />
          </svg>
        </TrayButton>
        <Clock>
          <span>20:05</span>
          <span>21-06-2025</span>
        </Clock>
      </Tray>
    </Taskbar>
  );
}

export default function App() {
  return (
    <Screen>
      <GlobalStyle />
      <Browser />
      <Page />
      <WindowsTaskbar />
      <Confirm />
    </Screen>
  );
}
